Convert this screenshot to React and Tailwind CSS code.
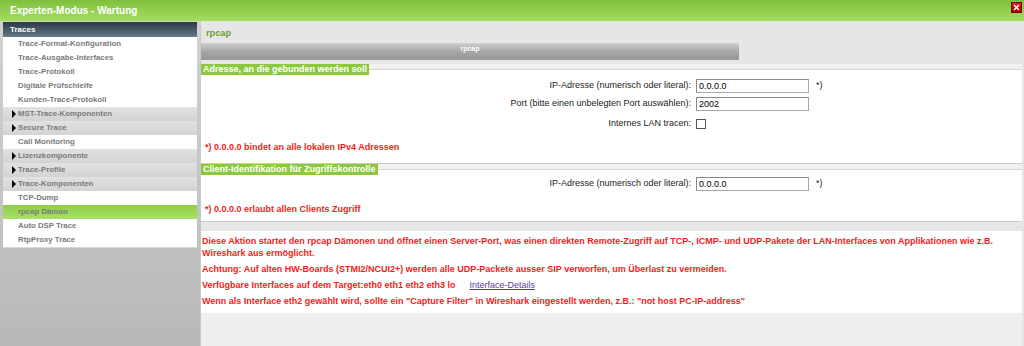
import React from 'react';

const menu = [
  { label: 'Trace-Format-Konfiguration', kind: 'item' },
  { label: 'Trace-Ausgabe-Interfaces', kind: 'item' },
  { label: 'Trace-Protokoll', kind: 'item' },
  { label: 'Digitale Prüfschleife', kind: 'item' },
  { label: 'Kunden-Trace-Protokoll', kind: 'item' },
  { label: 'MST-Trace-Komponenten', kind: 'group' },
  { label: 'Secure Trace', kind: 'group' },
  { label: 'Call Monitoring', kind: 'item' },
  { label: 'Lizenzkomponente', kind: 'group' },
  { label: 'Trace-Profile', kind: 'group' },
  { label: 'Trace-Komponenten', kind: 'group' },
  { label: 'TCP-Dump', kind: 'item' },
  { label: 'rpcap Dämon', kind: 'active' },
  { label: 'Auto DSP Trace', kind: 'item' },
  { label: 'RtpProxy Trace', kind: 'item' },
];

function Arrow() {
  return (
    <svg width="4" height="8" viewBox="0 0 4 8" className="absolute left-[9px] top-[3px]">
      <path d="M0 0 L4 4 L0 8 Z" fill="#000" />
    </svg>
  );
}

function MenuRow({ label, kind }) {
  const bg =
    kind === 'group'
      ? 'bg-gradient-to-b from-[#e2e2e2] to-[#d3d3d3]'
      : kind === 'active'
        ? 'bg-gradient-to-b from-[#8fcf48] to-[#a9e066] text-[#6e8453]'
        : 'bg-white';
  return (
    <div className={`relative h-[14px] leading-[14px] pl-[15px] text-[7.8px] font-bold text-[#7a7a7a] ${bg}`}>
      {kind === 'group' && <Arrow />}
      {label}
    </div>
  );
}

function TextInput({ value }) {
  return (
    <div className="w-[113px] h-[14px] border border-[#a9a9a9] border-t-[#8a8a8a] border-l-[#8a8a8a] bg-white pl-[2px] text-[9px] leading-[12px] text-black">
      {value}
    </div>
  );
}

function Row({ label, children, note, extra = '' }) {
  return (
    <div className={`flex items-center ${extra}`}>
      <div className="w-[495px] pr-[5px] text-right text-[9px] text-[#222]">{label}</div>
      {children}
      {note && <span className="ml-[7px] text-[9px] text-[#222]">{note}</span>}
    </div>
  );
}

function Section({ title, children }) {
  return (
    <div className="bg-[#f1f1f1] border-b border-[#cdcdcd]">
      <fieldset className="border-t border-[#d6d6d6] bg-white">
        <legend className="bg-[#8dc63f] text-white font-bold text-[9px] leading-[11px] px-[2px]">{title}</legend>
        {children}
      </fieldset>
    </div>
  );
}

export default function App() {
  return (
    <div className="w-[1024px] h-[346px] overflow-hidden flex flex-col bg-[#e6e6e6] font-['Liberation_Sans',Arial,sans-serif]">
      {/* title bar */}
      <div className="relative h-[21px] shrink-0 bg-gradient-to-b from-[#7fbf3d] to-[#a6de5e] flex items-center pl-[10px]">
        <span className="text-white font-bold text-[10px]">Experten-Modus - Wartung</span>
        <div className="absolute right-[2px] top-[2px] w-[11px] h-[11px] bg-gradient-to-b from-[#e02020] to-[#a80000] border border-[#7a0000] flex items-center justify-center">
          <svg width="7" height="7" viewBox="0 0 7 7">
            <path d="M1 1 L6 6 M6 1 L1 6" stroke="#fff" strokeWidth="1.4" />
          </svg>
        </div>
      </div>

      <div className="flex flex-1 min-h-0">
        {/* sidebar */}
        <div className="w-[201px] shrink-0 bg-gradient-to-b from-[#d2d2d2] to-[#b8b8b8] pt-[1px] px-[3px] border-r border-[#c9c9c9]">
          <div className="h-[15px] leading-[15px] pl-[7px] bg-gradient-to-b from-[#2c3947] to-[#67798a] text-white font-bold text-[8px]">
            Traces
          </div>
          <div className="border-b border-[#d8d8d8]">
            {menu.map((m) => (
              <MenuRow key={m.label} {...m} />
            ))}
          </div>
        </div>

        {/* main */}
        <div className="flex-1 flex flex-col pr-[2px]">
          <div className="h-[22px] shrink-0 pl-[5px] pt-[7px] text-[9.2px] font-bold leading-[10px] text-[#6c9e33]">rpcap</div>
          <div className="h-[17px] w-[538px] shrink-0 bg-gradient-to-b from-[#cfcfcf] via-[#a6a6a6] to-[#979797] text-center text-white font-bold text-[7px] leading-[12px]">
            rpcap
          </div>
          <div className="h-[4px] shrink-0" />

          <Section title="Adresse, an die gebunden werden soll">
            <div className="flex flex-col gap-[4px] pt-[4px]">
              <Row label="IP-Adresse (numerisch oder literal):" note="*)">
                <TextInput value="0.0.0.0" />
              </Row>
              <Row label="Port (bitte einen unbelegten Port auswählen):">
                <TextInput value="2002" />
              </Row>
              <Row label="Internes LAN tracen:" extra="mt-[2px]">
                <div className="w-[10px] h-[10px] border border-[#555] bg-white my-[2px]" />
              </Row>
            </div>
            <div className="pl-[4px] pt-[10px] pb-[10px] text-[9px] font-bold leading-[12px] text-[#f51b1b]">
              *) 0.0.0.0 bindet an alle lokalen IPv4 Adressen
            </div>
          </Section>

          <Section title="Client-Identifikation für Zugriffskontrolle">
            <div className="pt-[2px]">
              <Row label="IP-Adresse (numerisch oder literal):" note="*)">
                <TextInput value="0.0.0.0" />
              </Row>
            </div>
            <div className="pl-[4px] pt-[12px] pb-[6px] text-[9px] font-bold leading-[12px] text-[#f51b1b]">
              *) 0.0.0.0 erlaubt allen Clients Zugriff
            </div>
          </Section>

          <div className="h-[9px] shrink-0" />

          <div className="bg-white pt-[4px] pb-[6px] pl-[1px] pr-[20px] flex flex-col gap-[4px] text-[9px] font-bold leading-[12px] text-[#f51b1b]">
            <p>
              Diese Aktion startet den rpcap Dämonen und öffnet einen Server-Port, was einen direkten Remote-Zugriff auf TCP-, ICMP- und UDP-Pakete der LAN-Interfaces von Applikationen wie z.B. Wireshark aus ermöglicht.
            </p>
            <p>Achtung: Auf alten HW-Boards (STMI2/NCUI2+) werden alle UDP-Packete ausser SIP verworfen, um Überlast zu vermeiden.</p>
            <p>
              Verfügbare Interfaces auf dem Target:eth0 eth1 eth2 eth3 lo
              <a href="#" className="ml-[14px] underline text-[#5a3c9c] font-normal">Interface-Details</a>
            </p>
            <p>Wenn als Interface eth2 gewählt wird, sollte ein "Capture Filter" in Wireshark eingestellt werden, z.B.: "not host PC-IP-address"</p>
          </div>
          <div className="flex-1 bg-[#efefef]" />
        </div>
      </div>
    </div>
  );
}
